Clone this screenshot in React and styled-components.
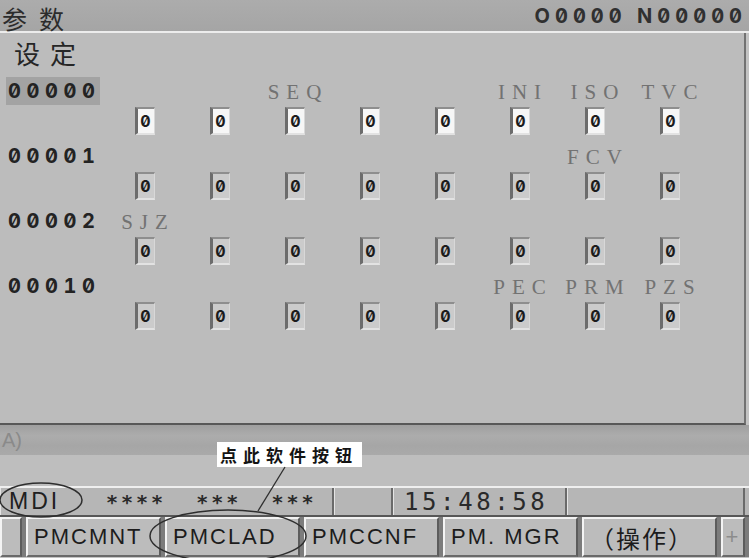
import React from 'react';
import styled, { createGlobalStyle } from 'styled-components';

const GlobalStyle = createGlobalStyle`
  html, body {
    margin: 0;
    padding: 0;
    background: #bdbdbd;
  }
`;

const Screen = styled.div`
  position: relative;
  width: 749px;
  height: 558px;
  overflow: hidden;
  display: flex;
  flex-direction: column;
  background: #c3c3c3;
  font-family: "DejaVu Sans Mono", monospace;
  color: #262626;
`;

const TitleBar = styled.div`
  height: 31px;
  flex-shrink: 0;
  display: flex;
  justify-content: space-between;
  align-items: flex-start;
  padding: 0 2px 0 2px;
  background: linear-gradient(#acacac, #a5a5a5);
  border-bottom: 2px solid #ececec;
`;

const TitleText = styled.div`
  height: 31px;
  font-family: "Noto Sans CJK SC", sans-serif;
  font-size: 25px;
  line-height: 1.45;
  letter-spacing: 12px;
  color: #2c2c2c;
`;

const Digits = styled.div`
  font-family: Inter, "DejaVu Sans Mono", sans-serif;
  font-feature-settings: "zero" 1, "tnum" 1;
  font-weight: 700;
`;

const ProgNo = styled(Digits)`
  align-self: center;
  font-size: 20px;
  letter-spacing: 5px;
  color: #303030;
`;

const Panel = styled.div`
  height: 392px;
  flex-shrink: 0;
  box-sizing: border-box;
  margin-right: 3px;
  padding: 3px 0 0 6px;
  background: #bcbcbc;
  border-right: 2px solid #727272;
  border-bottom: 2px solid #585858;
`;

const Heading = styled.div`
  font-family: "Noto Sans CJK SC", sans-serif;
  font-size: 26px;
  line-height: 34px;
  letter-spacing: 10px;
  padding-left: 8px;
  margin-bottom: 7px;
  color: #262626;
`;

const ParamBlock = styled.div`
  display: grid;
  grid-template-columns: 101px repeat(8, 75px);
  grid-template-rows: 28px 37px;
`;

const RowLabel = styled(Digits)`
  width: 94px;
  box-sizing: border-box;
  padding-left: 2px;
  font-size: 20px;
  line-height: 28px;
  letter-spacing: 5.6px;
  background: ${({ $active }) => ($active ? '#a3a3a3' : 'transparent')};
  color: #232323;
`;

const BitName = styled.div`
  text-align: center;
  padding-left: 7px;
  font-family: "Liberation Serif", "DejaVu Serif", serif;
  font-size: 21px;
  line-height: 30px;
  letter-spacing: 7px;
  color: #727272;
`;

const BoxCell = styled.div`
  display: flex;
  justify-content: center;
  align-items: flex-start;
`;

const Box = styled(Digits)`
  width: 20px;
  height: 28px;
  margin-top: 2px;
  box-sizing: border-box;
  border-left: 3px solid #6c6c6c;
  border-top: 2px solid #8e8e8e;
  border-right: 1px solid #d8d8d8;
  border-bottom: 2px solid #e2e2e2;
  background: ${({ $white }) => ($white ? '#f6f6f6' : '#cbcbcb')};
  font-size: 16px;
  line-height: 24px;
  text-align: center;
  color: #1c1c1c;
`;

const InputLine = styled.div`
  height: 30px;
  flex-shrink: 0;
  padding-left: 2px;
  background: linear-gradient(#9f9f9f, #acacac 35%, #a6a6a6 70%, #aaaaaa);
  font-family: "Liberation Sans", sans-serif;
  font-size: 20px;
  line-height: 30px;
  color: #8a8a8a;
`;

const Band = styled.div`
  height: 31px;
  flex-shrink: 0;
  background: #bebebe;
`;

const StatusBar = styled.div`
  height: 31px;
  flex-shrink: 0;
  box-sizing: border-box;
  display: flex;
  background: #b6b6b6;
  border-top: 2px solid #efefef;
  border-bottom: 2px solid #575757;
`;

const Segment = styled.div`
  width: ${({ $w }) => $w}px;
  flex-shrink: 0;
  box-sizing: border-box;
  display: flex;
  align-items: center;
  padding-left: ${({ $pad }) => $pad || 0}px;
  border-left: 1px solid #e4e4e4;
  border-right: 2px solid #6a6a6a;
  white-space: pre;
`;

const ModeText = styled.span`
  font-family: "Liberation Sans", sans-serif;
  font-size: 23px;
  letter-spacing: 3px;
  color: #202020;
  width: 97px;
`;

const Stars = styled.span`
  font-size: 20px;
  font-weight: bold;
  letter-spacing: 3px;
  color: #2a2a2a;
`;

const Clock = styled.span`
  font-size: 24px;
  letter-spacing: 3.6px;
  color: #2a2a2a;
`;

const SoftkeyBar = styled.div`
  height: 40px;
  flex-shrink: 0;
  display: flex;
  gap: 4px;
  background: #7c7c7c;
`;

const Key = styled.div`
  width: ${({ $w }) => $w}px;
  flex-shrink: 0;
  box-sizing: border-box;
  display: flex;
  align-items: center;
  justify-content: ${({ $center }) => ($center ? 'center' : 'flex-start')};
  padding-left: ${({ $center }) => ($center ? 0 : 6)}px;
  background: #bcbcbc;
  border-top: 2px solid #f2f2f2;
  border-left: 2px solid #f4f4f4;
  border-right: 2px solid #5c5c5c;
  border-bottom: 2px solid #6a6a6a;
  font-family: "Liberation Sans", "Noto Sans CJK SC", sans-serif;
  font-size: ${({ $cjk }) => ($cjk ? 24 : 22)}px;
  letter-spacing: 2px;
  color: ${({ $dim }) => ($dim ? '#8c8c8c' : '#1c1c1c')};
`;

const CjkText = styled.span`
  font-family: "Noto Sans CJK SC", sans-serif;
`;

const Callout = styled.div`
  position: absolute;
  left: 217px;
  top: 442px;
  width: 145px;
  height: 25px;
  box-sizing: border-box;
  padding-left: 3px;
  white-space: nowrap;
  overflow: hidden;
  background: #ffffff;
  font-family: "Noto Sans CJK SC", sans-serif;
  font-size: 17px;
  font-weight: bold;
  line-height: 25px;
  letter-spacing: 6px;
  color: #141414;
`;

const Overlay = styled.svg`
  position: absolute;
  left: 0;
  top: 420px;
  pointer-events: none;
`;

const params = [
  { no: '00000', bits: ['', '', 'SEQ', '', '', 'INI', 'ISO', 'TVC'] },
  { no: '00001', bits: ['', '', '', '', '', '', 'FCV', ''] },
  { no: '00002', bits: ['SJZ', '', '', '', '', '', '', ''] },
  { no: '00010', bits: ['', '', '', '', '', 'PEC', 'PRM', 'PZS'] },
];

const softkeys = [
  { label: '', w: 22 },
  { label: 'PMCMNT', w: 135 },
  { label: 'PMCLAD', w: 135 },
  { label: 'PMCCNF', w: 135 },
  { label: 'PM. MGR', w: 135 },
  { label: '（操作）', w: 135, cjk: true },
  { label: '+', w: 24, center: true, dim: true },
];

export default function App() {
  return (
    <>
      <GlobalStyle />
      <Screen>
        <TitleBar>
          <TitleText>参数</TitleText>
          <ProgNo>O0000 N00000</ProgNo>
        </TitleBar>

        <Panel>
          <Heading>设定</Heading>
          {params.map((p, r) => (
            <ParamBlock key={p.no}>
              <RowLabel $active={r === 0}>{p.no}</RowLabel>
              {p.bits.map((b, i) => (
                <BitName key={'n' + i}>{b}</BitName>
              ))}
              <div />
              {p.bits.map((_, i) => (
                <BoxCell key={'b' + i}>
                  <Box $white={r === 0}>0</Box>
                </BoxCell>
              ))}
            </ParamBlock>
          ))}
        </Panel>

        <InputLine>A)</InputLine>
        <Band />

        <StatusBar>
          <Segment $w={334} $pad={8}>
            <ModeText>MDI</ModeText>
            <Stars>****  ***  ***</Stars>
          </Segment>
          <Segment $w={59} />
          <Segment $w={174} $pad={10}>
            <Clock>15:48:58</Clock>
          </Segment>
          <Segment $w={178} />
        </StatusBar>

        <SoftkeyBar>
          {softkeys.map((k, i) => (
            <Key key={i} $w={k.w} $center={k.center} $dim={k.dim} $cjk={k.cjk}>
              {k.cjk ? <CjkText>{k.label}</CjkText> : k.label}
            </Key>
          ))}
        </SoftkeyBar>

        <Callout>点此软件按钮</Callout>
        <Overlay width="749" height="138" viewBox="0 0 749 138">
          <ellipse cx="41" cy="80" rx="41" ry="17" fill="none" stroke="#2e2e2e" strokeWidth="1.5" />
          <ellipse cx="228" cy="116" rx="78" ry="26" fill="none" stroke="#2e2e2e" strokeWidth="1.5" />
          <line x1="285" y1="47" x2="258" y2="91" stroke="#2e2e2e" strokeWidth="1.3" />
        </Overlay>
      </Screen>
    </>
  );
}
